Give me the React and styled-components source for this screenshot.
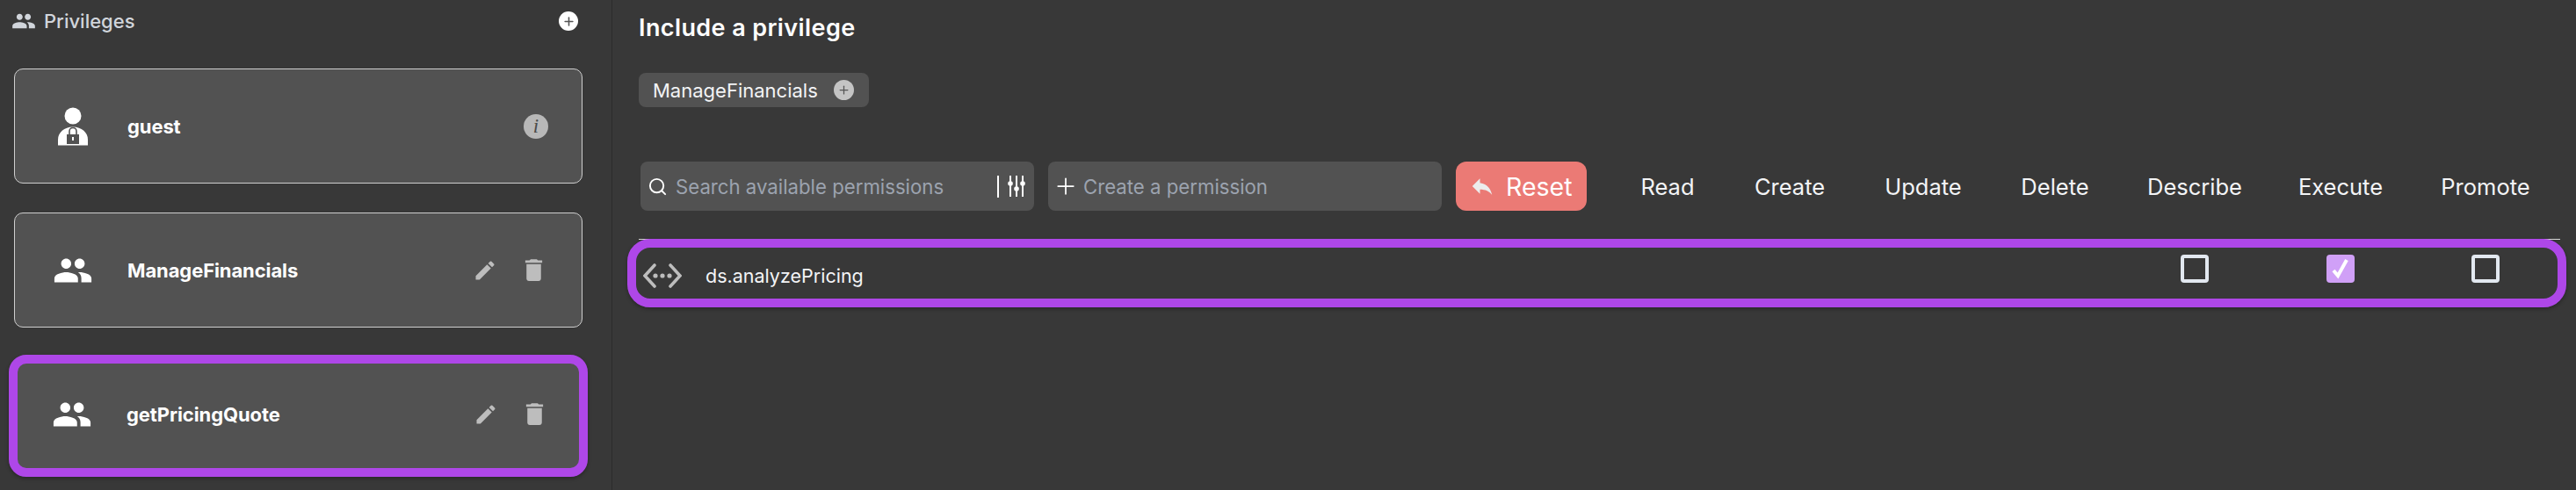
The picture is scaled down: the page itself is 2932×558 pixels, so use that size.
import React from 'react';
import styled, { createGlobalStyle } from 'styled-components';
import { MdPeople, MdEdit, MdDelete, MdReply } from 'react-icons/md';
import { Search, Plus } from 'lucide-react';

const GlobalStyle = createGlobalStyle`
  html, body {
    margin: 0;
    padding: 0;
    overflow: hidden;
    background-color: #383838;
  }
  body {
    font-family: Inter, "Open Sans", "Liberation Sans", sans-serif;
  }
`;

const COLUMNS = '1105px 132px 146px 158px 142px 176px 156px 174px';
const PURPLE = '#ae47e8';

const Page = styled.div`
  display: flex;
  width: 2932px;
  height: 558px;
  overflow: hidden;
  background-color: #383838;
`;

const Sidebar = styled.aside`
  box-sizing: border-box;
  width: 697px;
  flex-shrink: 0;
  padding: 13px 33px 0 16px;
  border-right: 1px solid #2b2b2b;
`;

const SidebarHeader = styled.header`
  display: flex;
  align-items: center;
  justify-content: space-between;
  height: 22px;
  margin: 0 5px 43px -3px;
`;

const SidebarTitle = styled.h2`
  display: flex;
  align-items: center;
  gap: 9px;
  margin: 0;
  color: #d1d5db;
  font-size: 22px;
  font-weight: 500;
`;

const PlusCircle = styled.span`
  display: flex;
  align-items: center;
  justify-content: center;
  width: ${(p) => p.$size}px;
  height: ${(p) => p.$size}px;
  border-radius: 50%;
  background-color: ${(p) => p.$color};
  color: #555555;
`;

const CardList = styled.div`
  display: flex;
  flex-direction: column;
  gap: 33px;
`;

const Card = styled.div`
  position: relative;
  box-sizing: border-box;
  display: flex;
  align-items: center;
  height: 131px;
  padding: 0 38px 0 43px;
  border: ${(p) => (p.$highlighted ? 'none' : '1px solid #cfcfcf')};
  border-radius: 10px;
  background-color: #525252;
`;

const CardIcon = styled.span`
  display: flex;
  align-items: center;
  justify-content: center;
  width: 46px;
  margin-right: 39px;
  color: #ffffff;
`;

const CardName = styled.span`
  flex: 1;
  color: #ffffff;
  font-size: 22px;
  font-weight: 700;
  letter-spacing: -0.1px;
`;

const CardActions = styled.div`
  display: flex;
  align-items: center;
  gap: 25px;
  color: #bdbdbd;
`;

const InfoBadge = styled.span`
  display: flex;
  align-items: center;
  justify-content: center;
  width: 28px;
  height: 28px;
  border-radius: 50%;
  background-color: #b8b8b8;
  color: #4a4a4a;
  font-family: "Liberation Serif", serif;
  font-size: 23px;
  font-style: italic;
`;

const CardHighlight = styled.div`
  position: absolute;
  top: -2px;
  left: -6px;
  right: -6px;
  bottom: -6px;
  border: 10px solid ${PURPLE};
  border-radius: 20px;
  box-shadow: 0 2px 4px rgba(0, 0, 0, 0.3);
  pointer-events: none;
`;

const Main = styled.main`
  flex: 1;
  min-width: 0;
  padding: 15px 0 0 30px;
`;

const Title = styled.h1`
  margin: 0 0 35px;
  height: 33px;
  color: #ffffff;
  font-size: 27px;
  line-height: 33px;
  font-weight: 600;
  letter-spacing: 0.4px;
`;

const Chip = styled.div`
  display: inline-flex;
  align-items: center;
  gap: 18px;
  height: 39px;
  padding: 0 17px 0 16px;
  border-radius: 8px;
  background-color: #525252;
  color: #f3f4f6;
  font-size: 22px;
`;

const ChipRow = styled.div`
  display: flex;
  margin-bottom: 62px;
`;

const TableHead = styled.div`
  display: grid;
  grid-template-columns: ${COLUMNS};
  align-items: center;
  height: 56px;
  padding-bottom: 32px;
  border-bottom: 1px solid #d8d8d8;
  width: 2187px;
`;

const Toolbar = styled.div`
  display: flex;
  gap: 16px;
  padding-left: 2px;
`;

const InputBox = styled.div`
  box-sizing: border-box;
  display: flex;
  align-items: center;
  gap: ${(p) => p.$gap}px;
  width: 448px;
  height: 56px;
  padding: 0 10px 0 ${(p) => p.$inset}px;
  border-radius: 8px;
  background-color: #525252;
  color: #ffffff;
`;

const InputText = styled.span`
  flex: 1;
  color: #9ca3af;
  font-size: 22.2px;
`;

const FilterBar = styled.span`
  width: 2px;
  height: 25px;
  margin-right: 1px;
  background-color: #ffffff;
`;

const ResetButton = styled.button`
  box-sizing: border-box;
  display: flex;
  align-items: center;
  gap: 12px;
  width: 149px;
  height: 56px;
  padding: 0 0 0 15px;
  border: none;
  border-radius: 12px;
  background-color: #eb7a75;
  color: #ffffff;
  font-family: inherit;
  font-size: 28.5px;
`;

const ColumnLabel = styled.span`
  color: #f3f4f6;
  font-size: 25.5px;
  text-align: center;
`;

const Row = styled.div`
  position: relative;
  display: grid;
  grid-template-columns: ${COLUMNS};
  width: 2187px;
  height: 78px;
`;

const RowName = styled.div`
  grid-column: 1 / 6;
  display: flex;
  align-items: center;
  gap: 27px;
  height: 82px;
  padding-left: 5px;
  color: #f3f4f6;
  font-size: 21.5px;
`;

const CheckCell = styled.div`
  display: flex;
  justify-content: center;
  padding-top: 17px;
`;

const Checkbox = styled.span`
  box-sizing: border-box;
  display: flex;
  align-items: center;
  justify-content: center;
  width: 32px;
  height: 32px;
  border: ${(p) => (p.$checked ? 'none' : '4px solid #e2e8f0')};
  border-radius: 4px;
  background-color: ${(p) => (p.$checked ? '#d0a0f7' : 'transparent')};
`;

const RowHighlight = styled.div`
  position: absolute;
  top: -1px;
  left: -13px;
  right: -7px;
  height: 78px;
  box-sizing: border-box;
  border: 10px solid ${PURPLE};
  border-radius: 26px;
  box-shadow: 0 2px 4px rgba(0, 0, 0, 0.3);
  pointer-events: none;
`;

const GuestIcon = () => (
  <svg width="36" height="44" viewBox="0 0 36 44">
    <circle cx="18" cy="10" r="9.5" fill="#fff" />
    <path d="M1 43.5V37C1 29 8 22.5 18 22.5S35 29 35 37v6.5Z" fill="#fff" />
    <path d="M11 31h14v11H11z" fill="#525252" />
    <path d="M14 31v-3.5a4 4 0 0 1 8 0V31" fill="none" stroke="#525252" strokeWidth="1.6" />
    <rect x="17" y="34" width="2" height="4" fill="#fff" />
  </svg>
);

const ApiIcon = () => (
  <svg width="44" height="28" viewBox="0 0 44 28" fill="none" stroke="#bdbdbd" strokeWidth="3.6" strokeLinecap="round">
    <path d="M13 2 2 14l11 12M31 2l11 12-11 12" />
    <circle cx="14" cy="14" r="2.6" fill="#bdbdbd" stroke="none" />
    <circle cx="22" cy="14" r="2.6" fill="#bdbdbd" stroke="none" />
    <circle cx="30" cy="14" r="2.6" fill="#bdbdbd" stroke="none" />
  </svg>
);

const SlidersIcon = () => (
  <svg width="20" height="24" viewBox="0 0 20 24" fill="#fff" stroke="#fff">
    <path d="M3 0v24M10 0v24M17 0v24" strokeWidth="2" />
    <circle cx="3" cy="9" r="2.8" stroke="none" />
    <circle cx="10" cy="15" r="2.8" stroke="none" />
    <circle cx="17" cy="9" r="2.8" stroke="none" />
  </svg>
);

const CheckMark = () => (
  <svg width="24" height="24" viewBox="0 0 24 24" fill="none" stroke="#fff" strokeWidth="4">
    <path d="M4 14l5 6 10-18" />
  </svg>
);

const cards = [
  { name: 'guest', guest: true },
  { name: 'ManageFinancials' },
  { name: 'getPricingQuote', highlighted: true },
];

const columns = ['Read', 'Create', 'Update', 'Delete', 'Describe', 'Execute', 'Promote'];
const rowChecks = [false, true, false];

export default function App() {
  return (
    <Page>
      <GlobalStyle />
      <Sidebar>
        <SidebarHeader>
          <SidebarTitle>
            <MdPeople size={28} />
            Privileges
          </SidebarTitle>
          <PlusCircle $size={22} $color="#ffffff">
            <Plus size={15} strokeWidth={2.5} />
          </PlusCircle>
        </SidebarHeader>
        <CardList>
          {cards.map((card) => (
            <Card key={card.name} $highlighted={card.highlighted}>
              <CardIcon>{card.guest ? <GuestIcon /> : <MdPeople size={56} />}</CardIcon>
              <CardName>{card.name}</CardName>
              <CardActions>
                {card.guest ? (
                  <InfoBadge>i</InfoBadge>
                ) : (
                  <>
                    <MdEdit size={28} />
                    <MdDelete size={33} />
                  </>
                )}
              </CardActions>
              {card.highlighted && <CardHighlight />}
            </Card>
          ))}
        </CardList>
      </Sidebar>
      <Main>
        <Title>Include a privilege</Title>
        <ChipRow>
          <Chip>
            ManageFinancials
            <PlusCircle $size={23} $color="#c4c4c4">
              <Plus size={15} strokeWidth={2} />
            </PlusCircle>
          </Chip>
        </ChipRow>
        <TableHead>
          <Toolbar>
            <InputBox $inset={8} $gap={9}>
              <Search size={23} />
              <InputText>Search available permissions</InputText>
              <FilterBar />
              <SlidersIcon />
            </InputBox>
            <InputBox $inset={5} $gap={5}>
              <Plus size={30} strokeWidth={1.4} />
              <InputText>Create a permission</InputText>
            </InputBox>
            <ResetButton>
              <MdReply size={30} color="#ececec" />
              Reset
            </ResetButton>
          </Toolbar>
          {columns.map((label) => (
            <ColumnLabel key={label}>{label}</ColumnLabel>
          ))}
        </TableHead>
        <Row>
          <RowName>
            <ApiIcon />
            ds.analyzePricing
          </RowName>
          {rowChecks.map((checked, index) => (
            <CheckCell key={index}>
              <Checkbox $checked={checked}>{checked && <CheckMark />}</Checkbox>
            </CheckCell>
          ))}
          <RowHighlight />
        </Row>
      </Main>
    </Page>
  );
}
